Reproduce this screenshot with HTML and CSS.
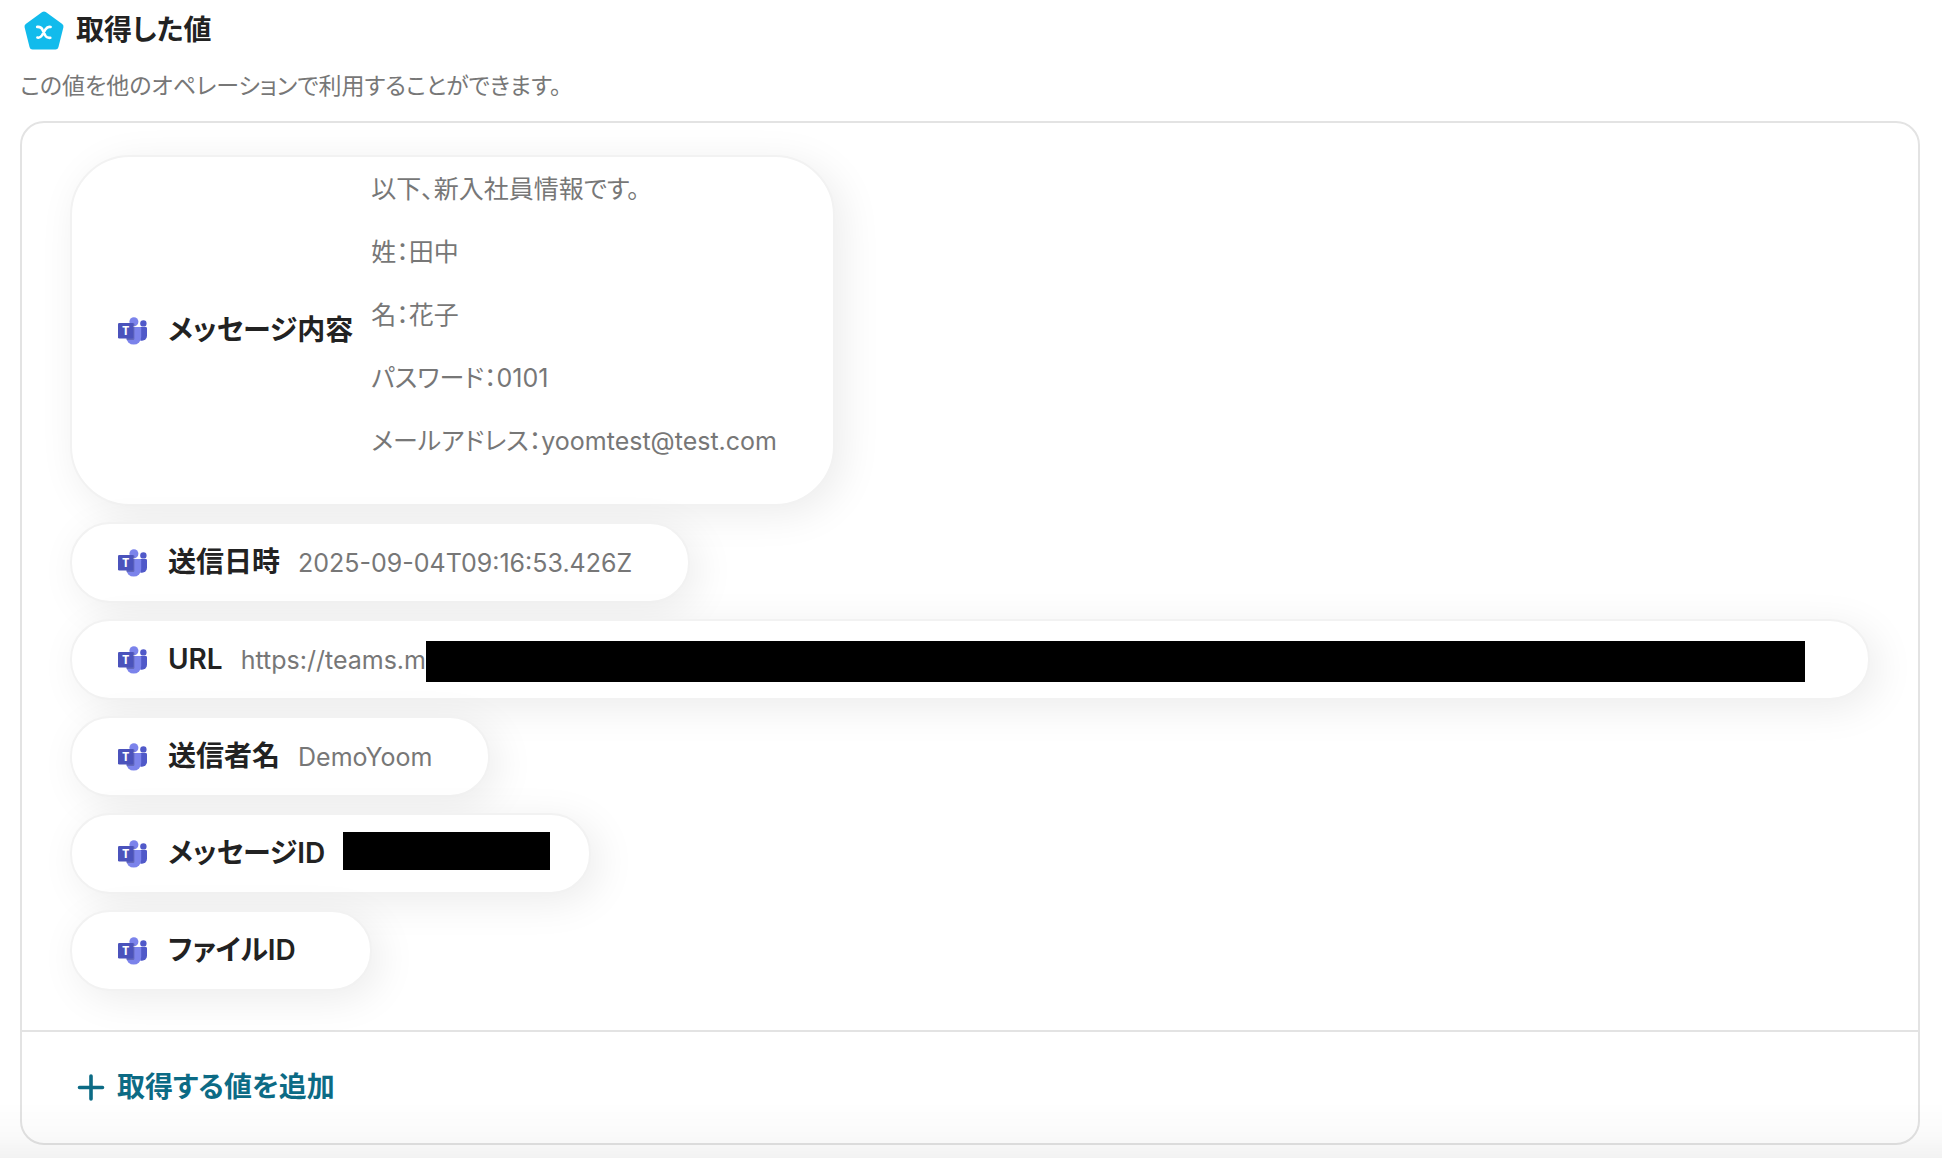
FILE: index.html
```html
<!DOCTYPE html>
<html lang="ja">
<head>
  <meta charset="UTF-8" />
  <meta name="viewport" content="width=device-width, initial-scale=1.0" />
  <title>取得した値</title>
  <link rel="stylesheet" href="styles.css">
</head>
<body>
  <!-- shared Teams icon -->
  <svg class="sprite" aria-hidden="true">
    <symbol id="teams" viewBox="0 0 30 28">
      <circle cx="25.4" cy="6.4" r="3.2" fill="#5059c9" />
      <path d="M19.5 9.900h8.200a1.300 1.300 0 0 1 1.300 1.300v7.500a5 5 0 0 1-5 5h-1.500z" fill="#5059c9" />
      <circle cx="15.9" cy="4.8" r="4.5" fill="#7b83eb" />
      <path d="M9.5 9.900h12.400a1.300 1.300 0 0 1 1.300 1.300v8.900a7.500 7.500 0 0 1-15 0V11z" fill="#7b83eb" />
      <path d="M8.5 6h6.600a1.300 1.300 0 0 1 1.300 1.300v14.400a1.300 1.300 0 0 1-1.300 1.300H8.500z" fill="#000" opacity="0.2" />
      <rect x="0" y="6" width="15.4" height="15.6" rx="1.3" fill="#4b53bc" />
      <text x="7.7" y="17.8" class="teams-letter">T</text>
    </symbol>
  </svg>

  <main class="container">
    <header class="header">
      <svg class="header-icon" viewBox="0 0 40 40" aria-hidden="true">
        <path d="M20 4.500 36.500 16.500 31.500 36.500H8.500L3.500 16.500z" fill="#12bbec" stroke="#12bbec" stroke-width="6" stroke-linejoin="round" />
        <path d="M13.200 16.900c3-.3 4.300.5 5.200 2.700l2.900 5.900c1 1.900 2.200 2.500 5 2.300M26.600 17c-2.400-.6-3.800.4-5 2.200l-3.600 6.200c-1.200 1.800-2.600 2.600-4.600 2.200" fill="none" stroke="#fff" stroke-width="2.6" stroke-linecap="round" />
      </svg>
      <h1 class="title">取得した値</h1>
    </header>
    <p class="subtitle">この値を他のオペレーションで利用することができます。</p>

    <section class="panel">
      <ul class="values">
        <li class="chip chip-tall">
          <svg class="chip-icon" aria-hidden="true"><use href="#teams" /></svg>
          <span class="chip-label">メッセージ内容</span>
          <div class="chip-value">
            <p>以下、新入社員情報です。</p>
            <p>姓：田中</p>
            <p>名：花子</p>
            <p>パスワード：0101</p>
            <p>メールアドレス：yoomtest@test.com</p>
          </div>
        </li>
        <li class="chip">
          <svg class="chip-icon" aria-hidden="true"><use href="#teams" /></svg>
          <span class="chip-label">送信日時</span>
          <span class="chip-value">2025-09-04T09:16:53.426Z</span>
        </li>
        <li class="chip chip-wide">
          <svg class="chip-icon" aria-hidden="true"><use href="#teams" /></svg>
          <span class="chip-label">URL</span>
          <span class="chip-value">https://teams.m</span>
          <span class="mask mask-url"></span>
        </li>
        <li class="chip">
          <svg class="chip-icon" aria-hidden="true"><use href="#teams" /></svg>
          <span class="chip-label">送信者名</span>
          <span class="chip-value">DemoYoom</span>
        </li>
        <li class="chip chip-id">
          <svg class="chip-icon" aria-hidden="true"><use href="#teams" /></svg>
          <span class="chip-label">メッセージID</span>
          <span class="mask mask-id"></span>
        </li>
        <li class="chip">
          <svg class="chip-icon" aria-hidden="true"><use href="#teams" /></svg>
          <span class="chip-label">ファイルID</span>
          <span class="chip-value"></span>
        </li>
      </ul>
      <div class="panel-footer">
        <button type="button" class="add-button">
          <svg class="add-icon" viewBox="0 0 28 28" aria-hidden="true">
            <path d="M14 2v23M2.500 13.500h23" fill="none" stroke="currentColor" stroke-width="3.6" stroke-linecap="round" />
          </svg>
          取得する値を追加
        </button>
      </div>
    </section>
  </main>
  <div class="bottom-fade"></div>
</body>
</html>
```
FILE: styles.css
```css
* {
  box-sizing: border-box;
}
body {
  margin: 0;
  background-color: #ffffff;
  color: #222222;
  font-family: 'Inter', 'Noto Sans CJK JP', sans-serif;
  font-feature-settings: 'palt';
}
.sprite {
  display: none;
}
.teams-letter {
  font-family: 'Open Sans', sans-serif;
  font-size: 12px;
  font-weight: 700;
  fill: #ffffff;
  text-anchor: middle;
}
.container {
  padding: 8px 22px 12px 20px;
}
.header {
  display: flex;
  align-items: center;
  gap: 12px;
  height: 44px;
  padding-left: 4px;
}
.header-icon {
  width: 40px;
  height: 40px;
}
.title {
  margin: 0;
  font-size: 28px;
  line-height: 44px;
  font-weight: 600;
}
.subtitle {
  margin: 17px 0;
  font-size: 23px;
  line-height: 35px;
  color: #777777;
}
.panel {
  border: 2px solid #e3e3e3;
  border-radius: 24px;
}
.values {
  display: flex;
  flex-direction: column;
  align-items: flex-start;
  gap: 16px;
  margin: 0;
  padding: 32px 48px 39px;
  list-style: none;
}
.chip {
  display: flex;
  align-items: center;
  max-width: 100%;
  padding: 16px 56px 16px 46px;
  border: 2px solid #f2f2f2;
  border-radius: 40px;
  background-color: #ffffff;
  box-shadow: 8px 8px 40px rgba(0, 0, 0, 0.08);
}
.chip-tall {
  border-radius: 60px;
}
.chip-wide {
  width: 100%;
}
.chip-id {
  padding-right: 39px;
}
.chip-icon {
  flex: none;
  width: 30px;
  height: 28px;
  margin-right: 20px;
}
.chip-label {
  font-size: 28px;
  line-height: 45px;
  font-weight: 600;
  white-space: nowrap;
}
.chip-value {
  margin-left: 18px;
  font-size: 25px;
  line-height: 32px;
  color: #777777;
}
.chip-value p {
  margin: 0 0 31px;
}
.mask {
  background-color: #000000;
}
.mask-url {
  flex: 1;
  height: 41px;
  margin: 4px 7px 0 0;
}
.mask-id {
  width: 207px;
  height: 38px;
  margin: 0 0 6px 18px;
}
.panel-footer {
  border-top: 2px solid #e3e3e3;
  padding: 32px 55px;
}
.add-button {
  display: flex;
  align-items: center;
  gap: 12px;
  padding: 0;
  border: none;
  background: none;
  color: #0c6b85;
  font: inherit;
  font-size: 28px;
  line-height: 47px;
  font-weight: 600;
  font-feature-settings: inherit;
  cursor: pointer;
}
.add-icon {
  width: 28px;
  height: 28px;
}
.bottom-fade {
  position: fixed;
  left: 0;
  right: 0;
  bottom: 0;
  height: 56px;
  background: linear-gradient(rgba(0, 0, 0, 0), rgba(0, 0, 0, 0.02) 60%, rgba(0, 0, 0, 0.05));
  pointer-events: none;
}
```
